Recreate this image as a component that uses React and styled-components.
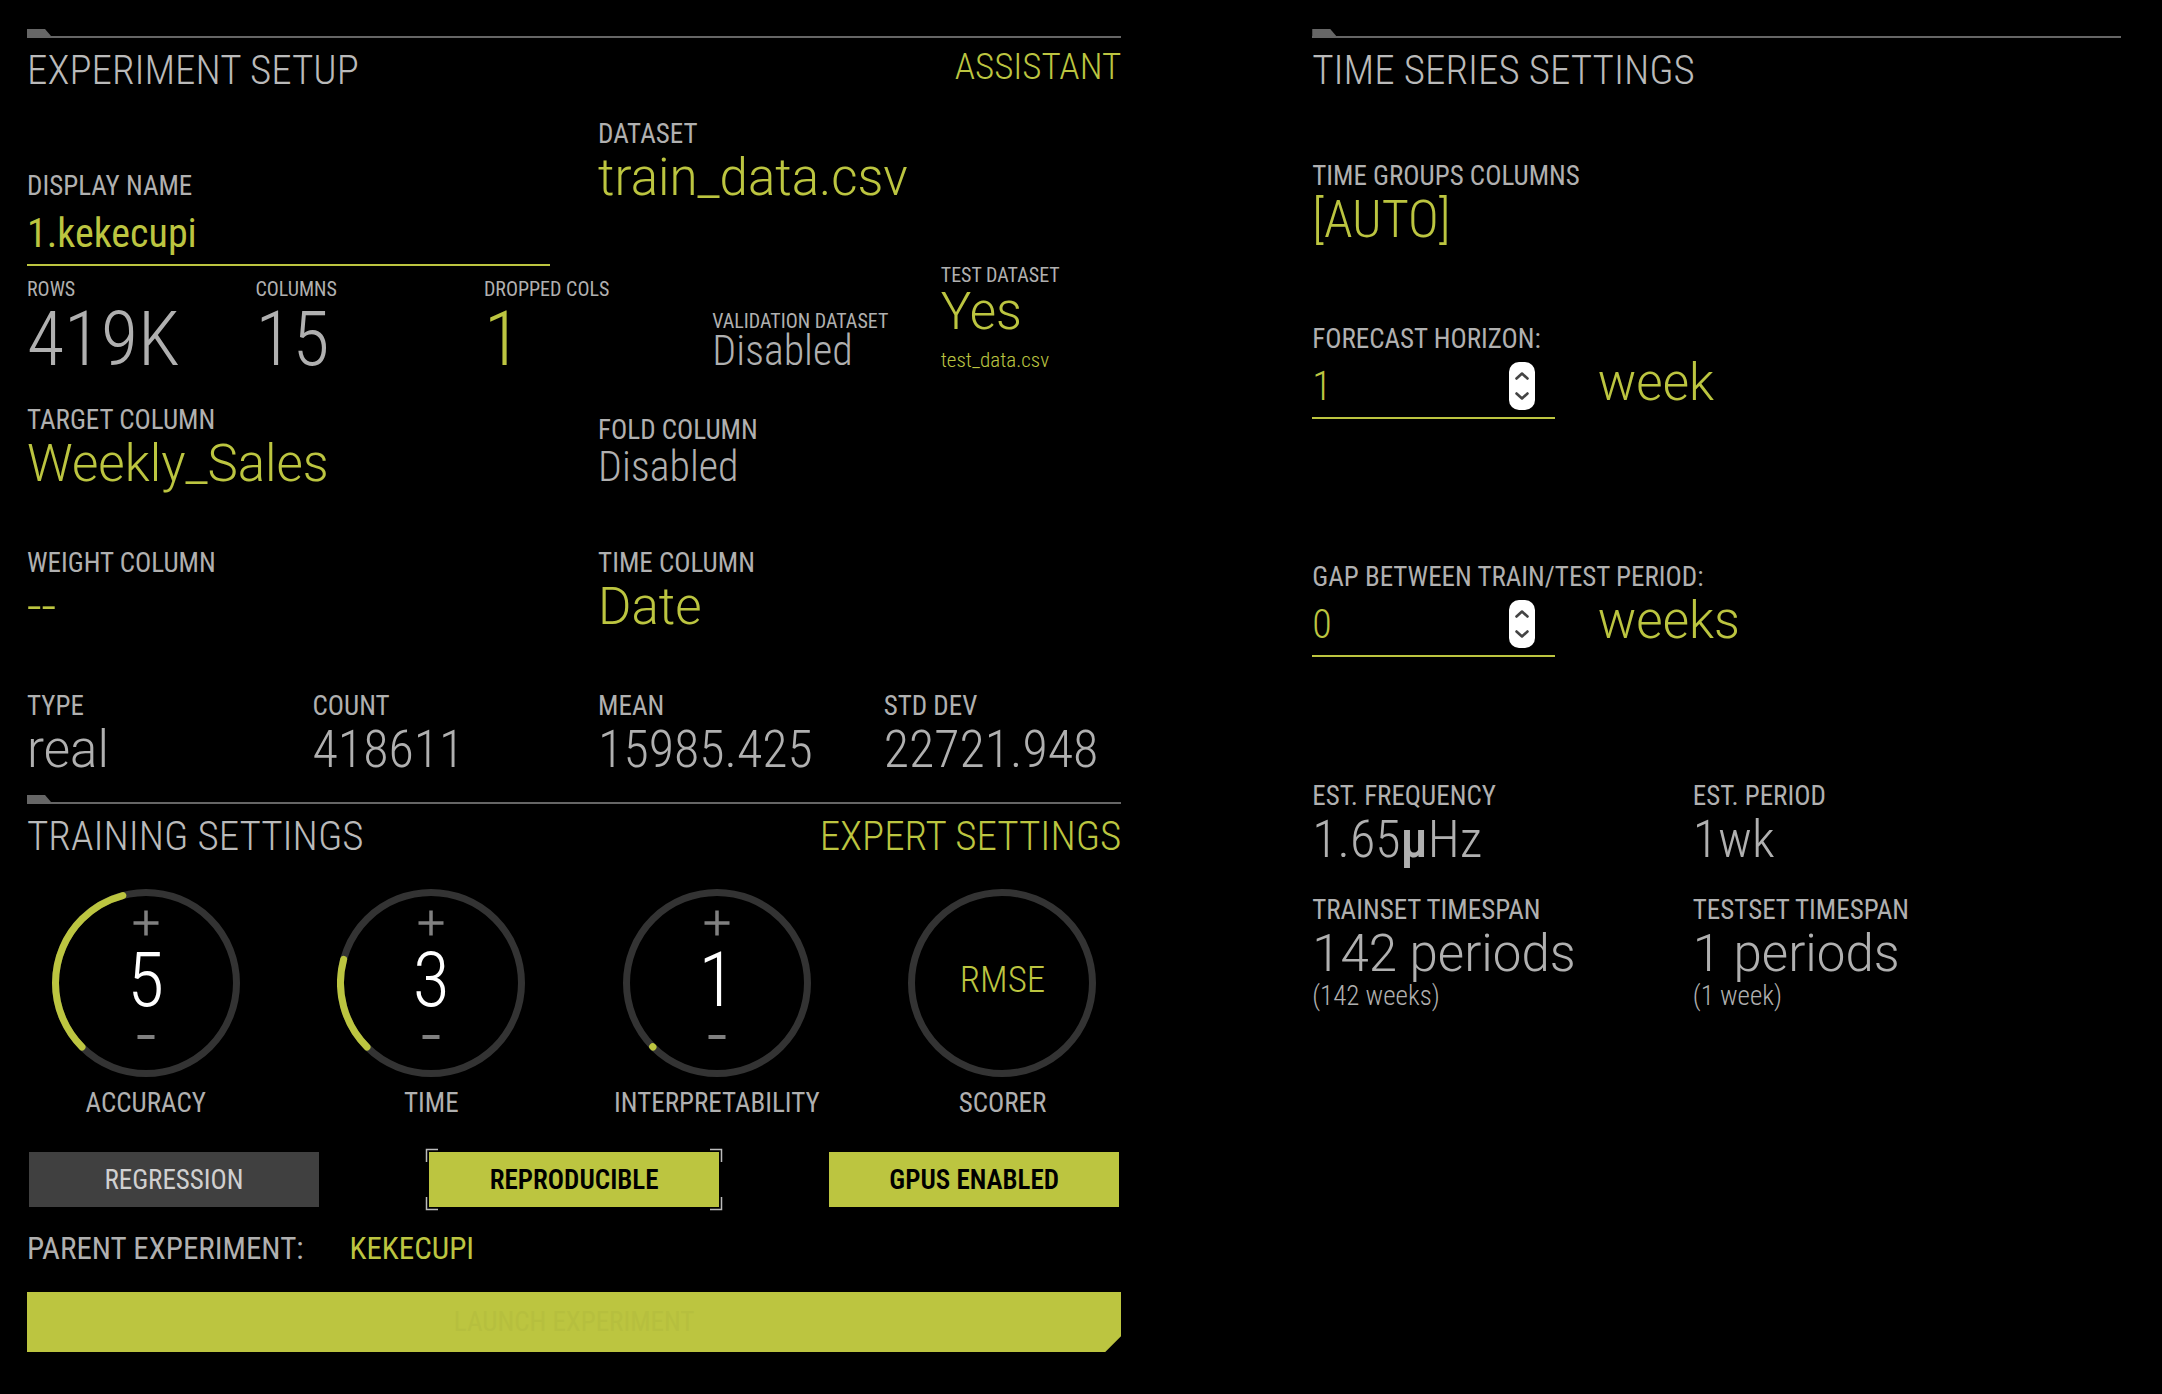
import React, { useState } from "react";
import styled, { createGlobalStyle } from "styled-components";

const lime = "#bcc540";
const grey = "#b0b0b0";
const narrow = `"Roboto Condensed", Roboto, "Liberation Sans", sans-serif`;
const regular = `Roboto, "Liberation Sans", sans-serif`;

const GlobalStyle = createGlobalStyle`
  * { box-sizing: border-box; }
  body {
    margin: 0;
    background: #000;
    color: ${grey};
    font-family: ${narrow};
  }
  button, input { font: inherit; color: inherit; }
  button { border: 0; padding: 0; background: none; cursor: pointer; }
`;

const Page = styled.main`
  display: grid;
  grid-template-columns: minmax(0, 23fr) minmax(0, 17fr);
  column-gap: 191px;
  align-items: start;
  padding: 29px 41px 40px 27px;
`;

const Panel = styled.section`
  display: flex;
  flex-direction: column;
`;

const Rule = styled.div`
  height: 9px;
  margin-top: ${(p) => p.$top || 0}px;
  border-bottom: 2px solid #666;
  &::before {
    content: "";
    display: block;
    width: 24px;
    height: 7px;
    background: #666;
    clip-path: polygon(0 0, 18px 0, 100% 100%, 0 100%);
  }
`;

const TitleRow = styled.header`
  display: flex;
  justify-content: space-between;
  align-items: flex-start;
  margin-top: 8px;
`;

const Title = styled.h2`
  margin: 0;
  font-size: 41px;
  line-height: 48px;
  font-weight: 300;
  color: #bababa;
`;

const TitleAction = styled.button`
  color: ${lime};
  font-size: ${(p) => (p.$large ? 41 : 37)}px;
  line-height: ${(p) => (p.$large ? 48 : 42)}px;
  font-weight: 300;
`;

const Row = styled.div`
  display: grid;
  grid-template-columns: ${(p) => p.$cols};
  column-gap: ${(p) => p.$gap ?? 48}px;
  align-items: ${(p) => p.$align || "end"};
  min-height: ${(p) => p.$minHeight || 0}px;
  margin-top: ${(p) => p.$top || 0}px;
`;

const Field = styled.div`
  display: flex;
  flex-direction: column;
  align-self: ${(p) => p.$self || "auto"};
  margin-top: ${(p) => p.$top || 0}px;
  min-width: 0;
  white-space: nowrap;
`;

const Label = styled.label`
  font-size: 27px;
  line-height: 32px;
`;

const SmallLabel = styled.span`
  font-size: 20px;
  line-height: 18px;
`;

const Value = styled.span`
  font-family: ${(p) => (p.$narrow ? narrow : regular)};
  font-size: ${(p) => (p.$narrow ? 52 : 51)}px;
  line-height: 56px;
  font-weight: 300;
  text-align: left;
  color: ${(p) => (p.$active ? lime : "inherit")};
`;

const BigValue = styled(Value)`
  margin-top: 8px;
  font-size: 76px;
  line-height: 66px;
`;

const MediumValue = styled(Value)`
  font-size: 42px;
  line-height: 42px;
`;

const Micro = styled.span`
  font-weight: 500;
`;

const Caption = styled.span`
  margin-top: 8px;
  font-size: 21px;
  line-height: 24px;
  font-weight: 300;
  color: ${lime};
`;

const Note = styled.span`
  font-size: 27px;
  line-height: 28px;
  font-weight: 300;
`;

const InputLine = styled.div`
  display: flex;
  align-items: center;
  height: 64px;
  padding-right: ${(p) => (p.$stepper ? 20 : 0)}px;
  border-bottom: 2px solid ${lime};
`;

const Input = styled.input`
  flex: 1;
  min-width: 0;
  height: 48px;
  padding: 0;
  border: 0;
  outline: 0;
  background: transparent;
  color: ${lime};
  font-size: 40px;
  font-weight: ${(p) => (p.type === "number" ? 300 : 400)};
  appearance: textfield;
  &::-webkit-inner-spin-button { appearance: none; }
`;

const Stepper = styled.div`
  display: flex;
  flex-direction: column;
  width: 26px;
  height: 48px;
  padding: 4px 0;
  border-radius: 10px;
  background: #fff;
`;

const StepButton = styled.button`
  flex: 1;
  display: grid;
  place-items: center;
`;

const DialCell = styled.div`
  display: flex;
  flex-direction: column;
  align-items: center;
  gap: 10px;
`;

const DialFace = styled.div`
  position: relative;
  display: flex;
  flex-direction: column;
  align-items: center;
  justify-content: center;
  width: 188px;
  height: 188px;
  padding-bottom: 6px;
`;

const DialRing = styled.svg`
  position: absolute;
  inset: 0;
`;

const DialButton = styled.button`
  position: relative;
  display: grid;
  place-items: center;
  width: 44px;
  height: 32px;
`;

const DialValue = styled.output`
  position: relative;
  font-size: 76px;
  line-height: 82px;
  font-weight: 300;
  color: #fff;
`;

const ScorerButton = styled.button`
  position: relative;
  font-size: 37px;
  line-height: 42px;
  font-weight: 300;
  color: ${lime};
`;

const Toggles = styled.div`
  display: flex;
  justify-content: space-between;
  margin-top: 33px;
  padding: 0 2px;
`;

const Toggle = styled.button`
  position: relative;
  width: 290px;
  height: 55px;
  font-size: 27px;
  font-weight: ${(p) => (p.$on ? 600 : 400)};
  color: ${(p) => (p.$on ? "#000" : "#d0d0d0")};
  background: ${(p) => (p.$on ? lime : "#404040")};
`;

const FocusCorners = styled.svg`
  position: absolute;
  top: -4px;
  left: -4px;
  width: calc(100% + 8px);
  height: calc(100% + 8px);
`;

const Parent = styled.div`
  display: flex;
  gap: 46px;
  margin-top: 22px;
  font-size: 31px;
  line-height: 40px;
`;

const ParentLink = styled.a`
  color: ${lime};
  text-decoration: none;
`;

const Launch = styled.button`
  height: 60px;
  margin-top: 23px;
  background: ${lime};
  color: #b6bf3e;
  font-size: 27px;
  clip-path: polygon(0 0, 100% 0, 100% calc(100% - 16px), calc(100% - 16px) 100%, 0 100%);
`;

function PanelHead({ title, top, children }) {
  return (
    <>
      <Rule $top={top} />
      <TitleRow>
        <Title>{title}</Title>
        {children}
      </TitleRow>
    </>
  );
}

function Dial({ label, initial }) {
  const [value, setValue] = useState(initial);
  const r = 90.5;
  const length = 2 * Math.PI * r;
  const arc = Math.max(((value - 1) / 9) * 0.75 * length, 0.5);
  return (
    <DialCell>
      <DialFace>
        <DialRing viewBox="0 0 188 188" aria-hidden="true">
          <circle cx="94" cy="94" r={r} fill="none" stroke="#333" strokeWidth="7" />
          <circle
            cx="94"
            cy="94"
            r={r}
            fill="none"
            stroke={lime}
            strokeWidth="7"
            strokeLinecap="round"
            strokeDasharray={`${arc} ${length}`}
            transform="rotate(135 94 94)"
          />
        </DialRing>
        <DialButton aria-label={`Increase ${label}`} onClick={() => setValue(Math.min(10, value + 1))}>
          <svg width="26" height="26" viewBox="0 0 26 26" stroke="#808080" strokeWidth="3.5">
            <path d="M0.5 13H25.5M13 0.5V25.5" />
          </svg>
        </DialButton>
        <DialValue>{value}</DialValue>
        <DialButton aria-label={`Decrease ${label}`} onClick={() => setValue(Math.max(1, value - 1))}>
          <svg width="18" height="4" viewBox="0 0 18 4" stroke="#808080" strokeWidth="4">
            <path d="M0.5 2H17.5" />
          </svg>
        </DialButton>
      </DialFace>
      <Label as="span">{label}</Label>
    </DialCell>
  );
}

function Chevron({ down }) {
  return (
    <svg
      width="14"
      height="8"
      viewBox="0 0 14 8"
      fill="none"
      stroke="#444"
      strokeWidth="2.6"
      strokeLinecap="round"
      strokeLinejoin="round"
      aria-hidden="true"
    >
      <path d={down ? "M1.5 1.5L7 6.5L12.5 1.5" : "M1.5 6.5L7 1.5L12.5 6.5"} />
    </svg>
  );
}

function NumberField({ id, label, initial, unit, top }) {
  const [value, setValue] = useState(initial);
  return (
    <Field $top={top}>
      <Label htmlFor={id}>{label}</Label>
      <Row $cols="30% 1fr" $gap={43} $align="start">
        <InputLine $stepper>
          <Input id={id} type="number" value={value} onChange={(e) => setValue(Number(e.target.value))} />
          <Stepper>
            <StepButton aria-label={`Increase ${label}`} onClick={() => setValue(value + 1)}>
              <Chevron />
            </StepButton>
            <StepButton aria-label={`Decrease ${label}`} onClick={() => setValue(Math.max(0, value - 1))}>
              <Chevron down />
            </StepButton>
          </Stepper>
        </InputLine>
        <Value as="button" $active>{unit}</Value>
      </Row>
    </Field>
  );
}

const columns = (n) => `repeat(${n}, minmax(0, 1fr))`;

export default function App() {
  const [name, setName] = useState("1.kekecupi");
  return (
    <>
      <GlobalStyle />
      <Page>
        <Panel>
          <PanelHead title="EXPERIMENT SETUP">
            <TitleAction>ASSISTANT</TitleAction>
          </PanelHead>
          <Row $cols={columns(2)} $top={24} $minHeight={148}>
            <Field>
              <Label htmlFor="display-name">DISPLAY NAME</Label>
              <InputLine>
                <Input id="display-name" type="text" value={name} onChange={(e) => setName(e.target.value)} />
              </InputLine>
            </Field>
            <Field $self="start">
              <Label as="span">DATASET</Label>
              <Value as="button" $active>train_data.csv</Value>
            </Field>
          </Row>
          <Row $cols={columns(5)}>
            <Field>
              <SmallLabel>ROWS</SmallLabel>
              <BigValue $narrow>419K</BigValue>
            </Field>
            <Field>
              <SmallLabel>COLUMNS</SmallLabel>
              <BigValue $narrow>15</BigValue>
            </Field>
            <Field>
              <SmallLabel>DROPPED COLS</SmallLabel>
              <BigValue as="button" $narrow $active>1</BigValue>
            </Field>
            <Field>
              <SmallLabel>VALIDATION DATASET</SmallLabel>
              <MediumValue $narrow>Disabled</MediumValue>
            </Field>
            <Field>
              <SmallLabel>TEST DATASET</SmallLabel>
              <Value as="button" $active>Yes</Value>
              <Caption>test_data.csv</Caption>
            </Field>
          </Row>
          <Row $cols={columns(2)} $top={32}>
            <Field>
              <Label as="span">TARGET COLUMN</Label>
              <Value as="button" $active>Weekly_Sales</Value>
            </Field>
            <Field $self="start" $top={10}>
              <Label as="span">FOLD COLUMN</Label>
              <MediumValue $narrow>Disabled</MediumValue>
            </Field>
          </Row>
          <Row $cols={columns(2)} $top={55}>
            <Field>
              <Label as="span">WEIGHT COLUMN</Label>
              <Value as="button" $active>--</Value>
            </Field>
            <Field>
              <Label as="span">TIME COLUMN</Label>
              <Value as="button" $active>Date</Value>
            </Field>
          </Row>
          <Row $cols={columns(4)} $top={55}>
            <Field>
              <Label as="span">TYPE</Label>
              <Value>real</Value>
            </Field>
            <Field>
              <Label as="span">COUNT</Label>
              <Value $narrow>418611</Value>
            </Field>
            <Field>
              <Label as="span">MEAN</Label>
              <Value $narrow>15985.425</Value>
            </Field>
            <Field>
              <Label as="span">STD DEV</Label>
              <Value $narrow>22721.948</Value>
            </Field>
          </Row>

          <PanelHead title="TRAINING SETTINGS" top={17}>
            <TitleAction $large>EXPERT SETTINGS</TitleAction>
          </PanelHead>
          <Row $cols={columns(4)} $top={29}>
            <Dial label="ACCURACY" initial={5} />
            <Dial label="TIME" initial={3} />
            <Dial label="INTERPRETABILITY" initial={1} />
            <DialCell>
              <DialFace>
                <DialRing viewBox="0 0 188 188" aria-hidden="true">
                  <circle cx="94" cy="94" r="90.5" fill="none" stroke="#333" strokeWidth="7" />
                </DialRing>
                <ScorerButton>RMSE</ScorerButton>
              </DialFace>
              <Label as="span">SCORER</Label>
            </DialCell>
          </Row>
          <Toggles>
            <Toggle>REGRESSION</Toggle>
            <Toggle $on>
              REPRODUCIBLE
              <FocusCorners viewBox="0 0 298 63" fill="none" stroke="#bbb" strokeWidth="1.5" aria-hidden="true">
                <path d="M1.5 14V1.5H13M285 1.5H296.5V14M296.5 49V61.5H285M13 61.5H1.5V49" />
              </FocusCorners>
            </Toggle>
            <Toggle $on>GPUS ENABLED</Toggle>
          </Toggles>
          <Parent>
            <span>PARENT EXPERIMENT:</span>
            <ParentLink href="#kekecupi">KEKECUPI</ParentLink>
          </Parent>
          <Launch>LAUNCH EXPERIMENT</Launch>
        </Panel>

        <Panel>
          <PanelHead title="TIME SERIES SETTINGS" />
          <Field $top={66}>
            <Label as="span">TIME GROUPS COLUMNS</Label>
            <Value as="button" $narrow $active>[AUTO]</Value>
          </Field>
          <NumberField id="horizon" label="FORECAST HORIZON:" initial={1} unit="week" top={75} />
          <NumberField id="gap" label="GAP BETWEEN TRAIN/TEST PERIOD:" initial={0} unit="weeks" top={142} />
          <Row $cols="8fr 9fr" $gap={0} $top={123}>
            <Field>
              <Label as="span">EST. FREQUENCY</Label>
              <Value $narrow>1.65<Micro>µ</Micro>Hz</Value>
            </Field>
            <Field>
              <Label as="span">EST. PERIOD</Label>
              <Value $narrow>1wk</Value>
            </Field>
          </Row>
          <Row $cols="8fr 9fr" $gap={0} $top={26}>
            <Field>
              <Label as="span">TRAINSET TIMESPAN</Label>
              <Value>142 periods</Value>
              <Note>(142 weeks)</Note>
            </Field>
            <Field>
              <Label as="span">TESTSET TIMESPAN</Label>
              <Value>1 periods</Value>
              <Note>(1 week)</Note>
            </Field>
          </Row>
        </Panel>
      </Page>
    </>
  );
}
